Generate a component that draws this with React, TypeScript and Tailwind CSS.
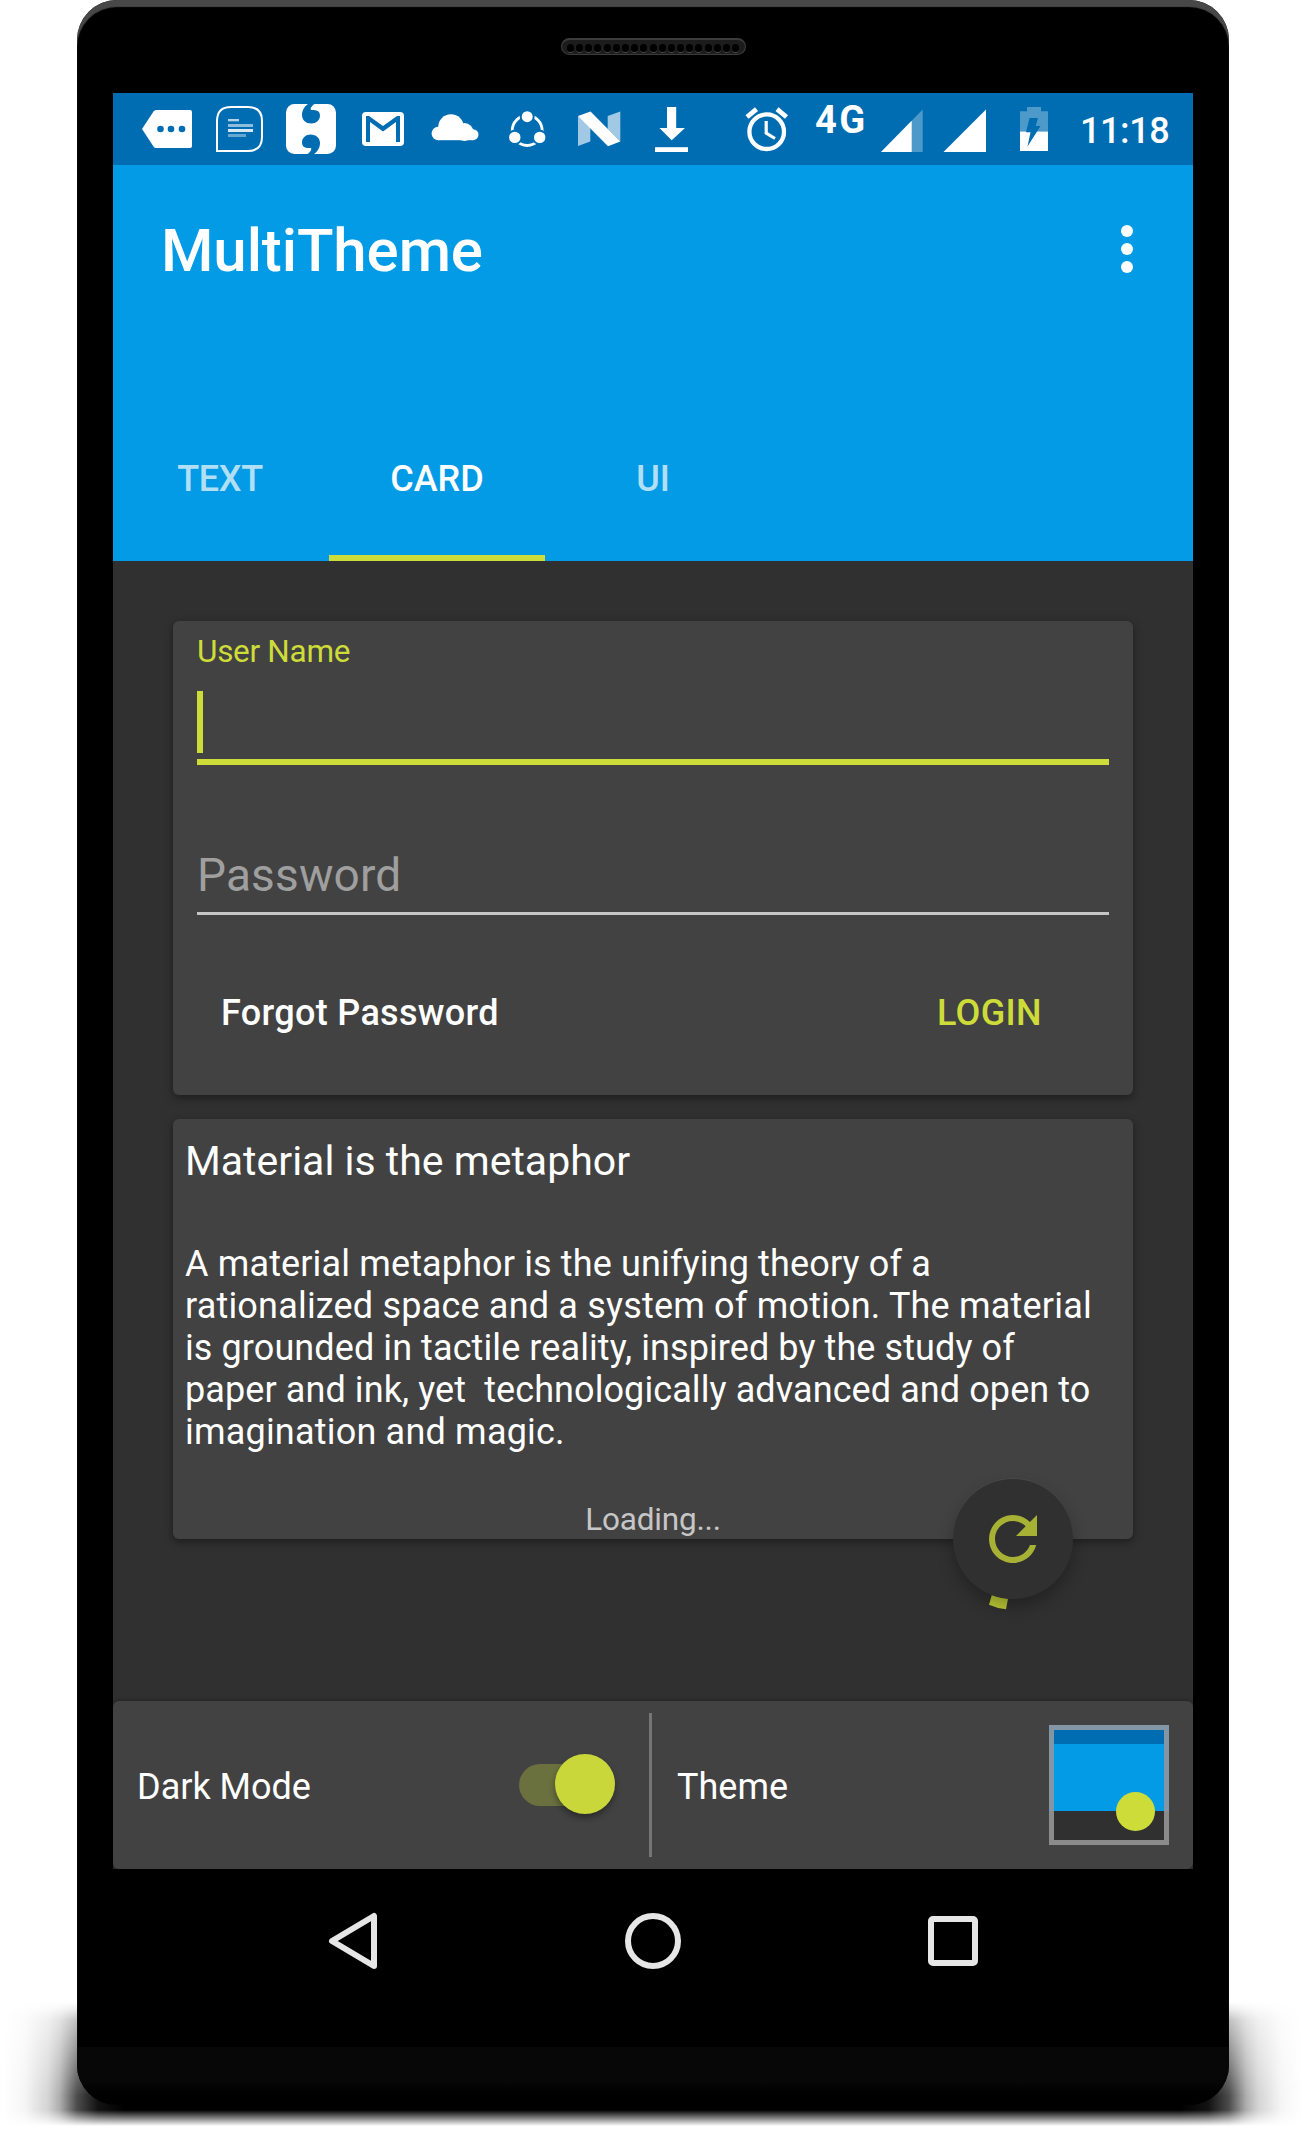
import React from 'react';

const BAR = '#006db3';

/* One slot of the status bar: the slots stand side by side and share one coordinate system. */
function Slot({ x, w, children }: { x: number; w: number; children: React.ReactNode }) {
  return (
    <svg className="flex-none" width={w} height={72} viewBox={`${x} 93 ${w} 72`} fill="#fff">
      {children}
    </svg>
  );
}

function StatusBar() {
  return (
    <div className="flex h-[72px] flex-none bg-[#006db3] font-medium text-white">
      <Slot x={113} w={91}>
        <path d="M156 110H190a2 2 0 0 1 2 2V146a2 2 0 0 1-2 2H156q-1.500 0-2.500-1.500L142 129L153.500 111.500Q154.500 110 156 110Z" />
        <g fill={BAR}>
          <circle cx="160.500" cy="129" r="3.300" />
          <circle cx="171" cy="129" r="3.300" />
          <circle cx="182" cy="129" r="3.300" />
        </g>
      </Slot>
      <Slot x={204} w={71}>
        <path d="M217 151V121Q217 107 231 107H248Q262 107 262 121V137Q262 151 248 151Z" fill="none" stroke="#fff" strokeWidth="2" />
        <rect x="228" y="119" width="11" height="2.300" opacity=".7" />
        <rect x="228" y="124" width="25" height="3" opacity=".55" />
        <rect x="228" y="129" width="25" height="3" opacity=".85" />
        <rect x="228" y="134" width="18" height="3" opacity=".4" />
      </Slot>
      <Slot x={275} w={74}>
        <rect x="286" y="104" width="50" height="50" rx="8.500" />
        <g fill={BAR}>
          <path d="M302 115C302 109 306 105 309.500 103H316C312 105.500 310 108 311 110C312.500 110 320 109 320 115.500C320 120 316 123.500 311.500 123.500C306 123.500 302 120 302 115Z" />
          <path d="M302 115C302 109 306 105 309.500 103H316C312 105.500 310 108 311 110C312.500 110 320 109 320 115.500C320 120 316 123.500 311.500 123.500C306 123.500 302 120 302 115Z" transform="rotate(180 311 129)" />
        </g>
      </Slot>
      <Slot x={349} w={68}>
        <rect x="362" y="112" width="42" height="34" rx="4" />
        <path d="M366 142V116H369L383 126L397 116H400V142H396V122L383 131.500L370 122V142Z" fill={BAR} />
      </Slot>
      <Slot x={417} w={77}>
        <circle cx="451" cy="127" r="12.800" />
        <circle cx="464.500" cy="132" r="9" />
        <circle cx="438.300" cy="133.500" r="6.700" />
        <circle cx="473" cy="134.700" r="5.500" />
        <rect x="438" y="130" width="35" height="10.200" />
      </Slot>
      <Slot x={494} w={67}>
        <circle cx="527.200" cy="130.500" r="15" fill="none" stroke="#fff" strokeWidth="2.800" />
        <g stroke={BAR} strokeWidth="2">
          <circle cx="527.200" cy="116.700" r="6.500" />
          <circle cx="514.800" cy="137.400" r="6.700" />
          <circle cx="539.700" cy="137.400" r="6.700" />
        </g>
      </Slot>
      <Slot x={561} w={76}>
        <g opacity=".63">
          <path d="M578 116V146L590.300 141.500V126Z" />
          <path d="M607.700 116L620.300 111.500V141.500L607.700 129Z" />
        </g>
        <path d="M578 116L590.500 111.500L620.300 141.500L608 146.300Z" />
      </Slot>
      <Slot x={637} w={80}>
        <path d="M667 107H676.200V128H685L671.700 140.300L659.500 128H667Z" />
        <rect x="655" y="147.200" width="33" height="4.800" />
      </Slot>
      <Slot x={717} w={98}>
        <g fill="none" stroke="#fff">
          <circle cx="766.700" cy="131.700" r="17.300" strokeWidth="4.300" />
          <path d="M747 117L756.500 109.200M777 109.200L786.500 117" strokeWidth="4.800" />
          <path d="M766.200 121V133L775 138.500" strokeWidth="3.200" />
        </g>
      </Slot>
      <span className="mt-[5px] w-[57px] flex-none text-[38px] leading-[44px] font-bold tracking-[2.5px]">4G</span>
      <Slot x={872} w={61}>
        <path d="M881 152L922.700 109.500V152Z" opacity=".3" />
        <path d="M881 152L911.700 120.700V152Z" />
      </Slot>
      <Slot x={933} w={70}>
        <path d="M943.500 152L986 109.500V152Z" />
      </Slot>
      <Slot x={1003} w={61}>
        <path d="M1020 131.500V111.300H1027V107H1041V111.300H1048V131.500Z" opacity=".3" />
        <path d="M1020 131.500H1048V151H1020Z" />
        <path d="M1029.500 118H1038L1035.700 126H1040.500L1027.500 146.500L1030.500 132.300H1026Z" fill={BAR} />
      </Slot>
      <span className="ml-[16px] text-[36px] leading-[76px] tracking-[-0.4px]">11:18</span>
    </div>
  );
}

function AppBar() {
  return (
    <div className="flex h-[396px] flex-none flex-col justify-between bg-[#039be5] text-white">
      <div className="flex h-[172px] items-center justify-between pr-[59px] pl-[48px]">
        <h1 className="text-[60px] leading-none font-medium tracking-[-0.1px]">MultiTheme</h1>
        <svg width="14" height="54" viewBox="0 0 14 54" fill="#fff" className="mb-1">
          <circle cx="7" cy="9" r="6" />
          <circle cx="7" cy="27" r="6" />
          <circle cx="7" cy="45" r="6" />
        </svg>
      </div>
      <div className="flex h-[165px] text-center text-[36px] leading-[167px] font-medium">
        <div className="w-[216px] pr-0.5 tracking-[-0.3px] text-white/70">TEXT</div>
        <div className="w-[216px] border-b-6 border-[#cddc39]">CARD</div>
        <div className="w-[216px] text-white/70">UI</div>
      </div>
    </div>
  );
}

function LoginCard() {
  return (
    <div className="flex h-[474px] flex-none flex-col rounded-md bg-[#424242] px-6 pt-[13px] shadow-[0_3px_8px_rgba(0,0,0,0.4)]">
      <div className="text-[31.5px] leading-[36px] tracking-[-0.3px] text-[#cddc39]">User Name</div>
      <div className="mt-[21px] h-[62px] w-[6px] bg-[#cddc39]" />
      <div className="mt-[6px] h-[6px] bg-[#cddc39]" />
      <div className="mt-[83px] h-[64px] text-[46px] leading-[54px] tracking-[0.15px] text-[#9f9f9f]">Password</div>
      <div className="h-[3px] bg-[#c6c6c6]" />
      <div className="mt-[62px] flex justify-between pr-[67px] pl-6 text-[36px] leading-[72px] font-medium">
        <span className="tracking-[0.32px] text-white">Forgot Password</span>
        <span className="tracking-[0.35px] text-[#cddc39]">LOGIN</span>
      </div>
    </div>
  );
}

function MetaphorCard() {
  return (
    <div className="relative mt-6 flex h-[420px] flex-none flex-col rounded-md bg-[#424242] px-3 pt-[18px] text-white shadow-[0_3px_8px_rgba(0,0,0,0.4)]">
      <div className="text-[41px] leading-[48px]">Material is the metaphor</div>
      <div className="mt-[58px] text-[36px] leading-[42px] tracking-[0.09px] whitespace-pre">
        <p className="tracking-[0.14px]">A material metaphor is the unifying theory of a</p>
        <p className="tracking-[0.19px]">rationalized space and a system of motion. The material</p>
        <p>is grounded in tactile reality, inspired by the study of</p>
        <p>{'paper and ink, yet  technologically advanced and open to'}</p>
        <p className="tracking-[0.2px]">imagination and magic.</p>
      </div>
      <div className="mt-[48px] text-center text-[31.5px] leading-[38px] tracking-[-0.2px] text-[#c6c6c6]">Loading...</div>

      {/* Refresh button lying over the card's lower edge, with the progress arc's tip below it */}
      <svg className="absolute top-[470px] left-[812px]" width="28" height="24" viewBox="985 1589 28 24">
        <path d="M991.800 1595L1008 1598.700L1006 1609.200Q997 1608.500 989 1604.800Z" fill="#bccb36" />
      </svg>
      <div className="absolute top-[360px] left-[780px] flex size-[120px] items-center justify-center rounded-full bg-[#303030] shadow-[0_8px_16px_rgba(0,0,0,0.28),0_-1px_1px_rgba(255,255,255,0.05)]">
        <svg width="72" height="72" viewBox="0 0 24 24" fill="#a7b235">
          <path d="M17.650 6.350C16.200 4.900 14.210 4 12 4c-4.420 0-7.990 3.580-7.990 8s3.570 8 7.990 8c3.730 0 6.840-2.550 7.730-6h-2.080c-.82 2.330-3.040 4-5.650 4-3.310 0-6-2.690-6-6s2.690-6 6-6c1.660 0 3.140.69 4.220 1.780L13 11h7V4l-2.350 2.350z" />
        </svg>
      </div>
    </div>
  );
}

function BottomBar() {
  return (
    <div className="flex h-[168px] flex-none items-center rounded-md bg-[#424242] pl-6 text-[36px] text-white shadow-[0_0_4px_rgba(0,0,0,0.4)]">
      <span className="mt-[3px] w-[382px] leading-none">Dark Mode</span>
      <div className="relative h-[42px] w-[84px] rounded-full bg-[#6b703f]">
        <div className="absolute -top-[10px] left-[35.500px] size-[60px] rounded-full bg-[#c9d73a] shadow-[0_4px_6px_rgba(0,0,0,0.35)]" />
      </div>
      <div className="ml-[46px] h-[144px] w-[3px] bg-[#757575]" />
      <span className="mt-[3px] ml-[25px] leading-none">Theme</span>
      <div className="mr-6 ml-auto size-[120px] bg-linear-to-b from-[#8296a5] from-72% to-[#8b8b8b] to-72% p-[5px]">
        <div className="relative h-full bg-[#303030]">
          <div className="h-[14px] bg-[#006db3]" />
          <div className="h-[67px] bg-[#039be5]" />
          <div className="absolute top-[62px] left-[62px] size-[39px] rounded-full bg-[#cddc39]" />
        </div>
      </div>
    </div>
  );
}

function NavBar() {
  return (
    <div className="flex h-[144px] flex-none items-center justify-between px-[246px]">
      <svg width="60" height="60" viewBox="323 1911 60 60" fill="none" stroke="#e6e6e6" strokeWidth="6" strokeLinejoin="round">
        <path d="M332 1941L374 1916V1966Z" />
      </svg>
      <svg width="60" height="60" viewBox="0 0 60 60" fill="none" stroke="#e6e6e6" strokeWidth="6">
        <circle cx="30" cy="30" r="25" />
      </svg>
      <svg width="60" height="60" viewBox="0 0 60 60" fill="none" stroke="#e6e6e6" strokeWidth="6">
        <rect x="8" y="8" width="44" height="44" rx="2" />
      </svg>
    </div>
  );
}

function Speaker() {
  return (
    <div className="mx-auto mt-[38px] flex h-[17px] w-[185px] items-center justify-center gap-[2.200px] rounded-full border border-t-2 border-[#3c3c3c] bg-[#1c1c1c]">
      {Array.from({ length: 19 }, (_, i) => (
        <span key={i} className="mt-0.5 h-[9px] w-[7px] rounded-full border-b border-[#4a4a4a] bg-black" />
      ))}
    </div>
  );
}

export default function App() {
  return (
    <div className="relative flex h-[2130px] w-[1305px] justify-center overflow-hidden bg-white pl-px font-['Roboto',sans-serif]">
      {/* Soft shadow on the table below the phone */}
      <div className="absolute top-[2000px] left-0 h-[126px] w-[1305px] bg-[linear-gradient(90deg,transparent_4px,rgba(0,0,0,0.04)_25px,rgba(0,0,0,0.17)_48px,rgba(0,0,0,0.32)_60px,rgba(0,0,0,0.7)_77px,rgba(0,0,0,0.93)_98px,#000_125px,#000_1180px,rgba(0,0,0,0.93)_1208px,rgba(0,0,0,0.7)_1229px,rgba(0,0,0,0.32)_1246px,rgba(0,0,0,0.17)_1258px,rgba(0,0,0,0.04)_1281px,transparent_1302px)] [mask-image:linear-gradient(180deg,transparent_2px,rgba(0,0,0,0.1)_9px,rgba(0,0,0,0.35)_20px,rgba(0,0,0,0.7)_62px,#000_96px,#000_110px,rgba(0,0,0,0.5)_118px,transparent_126px)]" />
      <div className="relative flex h-[2105px] w-[1152px] flex-col overflow-hidden rounded-[40px] bg-black shadow-[inset_0_7px_1px_#484848]">
        <div className="h-[93px] flex-none">
          <Speaker />
        </div>
        <div className="mx-[36px] flex h-[1776px] w-[1080px] flex-none flex-col bg-[#303030]">
          <StatusBar />
          <AppBar />
          <div className="flex h-[1140px] flex-none flex-col px-[60px] pt-[60px]">
            <LoginCard />
            <MetaphorCard />
          </div>
          <BottomBar />
        </div>
        <NavBar />
        <div className="mt-[34px] flex-1 bg-linear-to-b from-[#070707] from-60% to-black" />
      </div>
    </div>
  );
}
